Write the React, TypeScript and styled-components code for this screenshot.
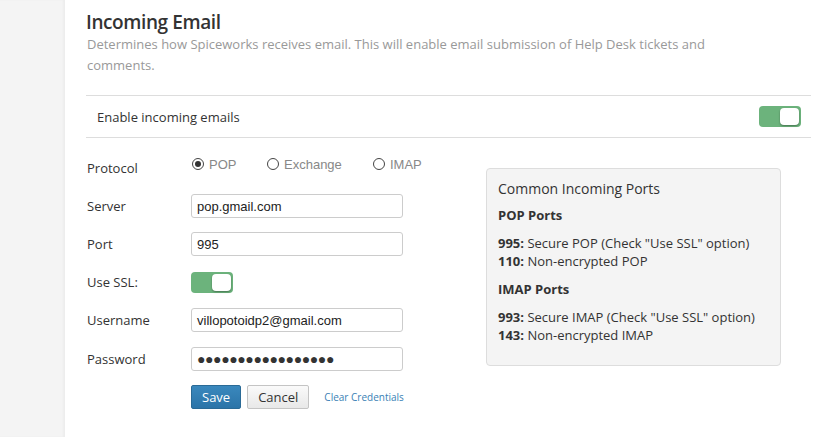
import React from "react";
import styled, { createGlobalStyle } from "styled-components";

const GlobalStyle = createGlobalStyle`
    html, body {
        margin: 0;
        padding: 0;
        background: #fff;
        font-family: "Open Sans", "Liberation Sans", sans-serif;
    }
`;

const Page = styled.div`
    display: flex;
    height: 437px;
    overflow: hidden;
`;

const Sidebar = styled.div`
    width: 65px;
    flex-shrink: 0;
    background: #f4f4f4;
    box-shadow: inset -2px 0 2px rgba(0, 0, 0, 0.03);
`;

const Main = styled.div`
    flex: 1;
    padding: 8px 13px 0 21px;
`;

const Title = styled.h1`
    margin: 0;
    font-size: 19px;
    font-weight: 600;
    letter-spacing: -0.4px;
    color: #333;
    line-height: 28px;
`;

const Description = styled.p`
    margin: -2px 0 0 1px;
    width: 640px;
    font-size: 13px;
    line-height: 21px;
    color: #999;
`;

const ToggleRow = styled.div`
    margin-top: 19px;
    display: flex;
    align-items: center;
    justify-content: space-between;
    height: 41px;
    padding: 0 10px 0 11px;
    border-top: 1px solid #ddd;
    border-bottom: 1px solid #ddd;
    font-size: 13px;
    color: #333;
`;

const Switch = styled.div`
    width: 42px;
    height: 21px;
    border-radius: 4px;
    background: #6cb37c;
    display: flex;
    justify-content: flex-end;
    padding: 2px;
    box-sizing: border-box;
`;

const Knob = styled.div`
    width: 19px;
    height: 17px;
    border-radius: 4px;
    background: #fff;
    box-shadow: 0 1px 2px rgba(0, 0, 0, 0.35);
`;

const Body = styled.div`
    display: flex;
    padding-left: 1px;
`;

const Form = styled.div`
    width: 398px;
    display: flex;
    flex-direction: column;
    padding-top: 11px;
`;

const Row = styled.div<{ $h?: number }>`
    display: flex;
    align-items: center;
    height: ${(p) => p.$h ?? 38}px;
`;

const Label = styled.div`
    width: 104px;
    font-size: 13px;
    color: #333;
`;

const Radios = styled.div`
    display: flex;
    margin-top: -8px;
`;

const Radio = styled.label<{ $w: number }>`
    display: flex;
    align-items: center;
    width: ${(p) => p.$w}px;
    font-family: "Liberation Sans", Arial, sans-serif;
    font-size: 13px;
    color: #888;
`;

const Circle = styled.span<{ $on?: boolean }>`
    width: 10px;
    height: 10px;
    border: 1px solid #444;
    border-radius: 50%;
    margin: 0 5px 0 1px;
    display: flex;
    align-items: center;
    justify-content: center;
    &::after {
        content: "";
        display: ${(p) => (p.$on ? "block" : "none")};
        width: 6px;
        height: 6px;
        border-radius: 50%;
        background: #333;
    }
`;

const Input = styled.div`
    width: 212px;
    height: 24px;
    box-sizing: border-box;
    border: 1px solid #ccc;
    border-radius: 3px;
    padding: 0 5px;
    display: flex;
    align-items: center;
    font-family: "Liberation Sans", Arial, sans-serif;
    font-size: 13px;
    color: #222;
`;

const Dots = styled.span`
    font-size: 14px;
    letter-spacing: -0.4px;
    color: #333;
`;

const Actions = styled.div`
    display: flex;
    align-items: center;
    margin-left: 104px;
    margin-top: 7px;
    gap: 6px;
`;

const Button = styled.button<{ $primary?: boolean }>`
    height: 24px;
    padding: 0 10px;
    font-family: "Open Sans", sans-serif;
    font-size: 13px;
    border-radius: 2px;
    border: 1px solid ${(p) => (p.$primary ? "#2a6a96" : "#c4c4c4")};
    color: ${(p) => (p.$primary ? "#fff" : "#333")};
    background: ${(p) =>
        p.$primary
            ? "linear-gradient(#3a88bd, #2b74a8)"
            : "linear-gradient(#fafafa, #e8e8e8)"};
`;

const Clear = styled.a`
    margin-left: 9px;
    font-size: 10px;
    color: #3a7fb5;
`;

const InfoBox = styled.div`
    margin-top: 30px;
    margin-left: 1px;
    width: 295px;
    height: 198px;
    box-sizing: border-box;
    background: #f4f4f4;
    border: 1px solid #ddd;
    border-radius: 4px;
    padding: 10px 11px;
    font-size: 13px;
    color: #333;
`;

const BoxTitle = styled.div`
    font-size: 14px;
    line-height: 20px;
    margin-bottom: 7px;
`;

const SubHead = styled.div`
    font-weight: 700;
    line-height: 18px;
    margin-bottom: 10px;
`;

const Line = styled.div`
    line-height: 18px;
`;

const Group = styled.div`
    margin-bottom: 10px;
`;

const Toggle = () => (
    <Switch>
        <Knob />
    </Switch>
);

const App: React.FC = () => {
    return (
        <Page>
            <GlobalStyle />
            <Sidebar />
            <Main>
                <Title>Incoming Email</Title>
                <Description>
                    Determines how Spiceworks receives email. This will enable
                    email submission of Help Desk tickets and comments.
                </Description>
                <ToggleRow>
                    <span>Enable incoming emails</span>
                    <Toggle />
                </ToggleRow>
                <Body>
                    <Form>
                        <Row>
                            <Label>Protocol</Label>
                            <Radios>
                                <Radio $w={75}>
                                    <Circle $on />
                                    POP
                                </Radio>
                                <Radio $w={106}>
                                    <Circle />
                                    Exchange
                                </Radio>
                                <Radio $w={60}>
                                    <Circle />
                                    IMAP
                                </Radio>
                            </Radios>
                        </Row>
                        <Row>
                            <Label>Server</Label>
                            <Input>pop.gmail.com</Input>
                        </Row>
                        <Row>
                            <Label>Port</Label>
                            <Input>995</Input>
                        </Row>
                        <Row>
                            <Label>Use SSL:</Label>
                            <Toggle />
                        </Row>
                        <Row>
                            <Label>Username</Label>
                            <Input>villopotoidp2@gmail.com</Input>
                        </Row>
                        <Row $h={39}>
                            <Label>Password</Label>
                            <Input>
                                <Dots>●●●●●●●●●●●●●●●●●</Dots>
                            </Input>
                        </Row>
                        <Actions>
                            <Button $primary>Save</Button>
                            <Button>Cancel</Button>
                            <Clear>Clear Credentials</Clear>
                        </Actions>
                    </Form>
                    <InfoBox>
                        <BoxTitle>Common Incoming Ports</BoxTitle>
                        <SubHead>POP Ports</SubHead>
                        <Group>
                            <Line>
                                <b>995:</b> Secure POP (Check "Use SSL" option)
                            </Line>
                            <Line>
                                <b>110:</b> Non-encrypted POP
                            </Line>
                        </Group>
                        <SubHead>IMAP Ports</SubHead>
                        <Line>
                            <b>993:</b> Secure IMAP (Check "Use SSL" option)
                        </Line>
                        <Line>
                            <b>143:</b> Non-encrypted IMAP
                        </Line>
                    </InfoBox>
                </Body>
            </Main>
        </Page>
    );
};

export default App;
